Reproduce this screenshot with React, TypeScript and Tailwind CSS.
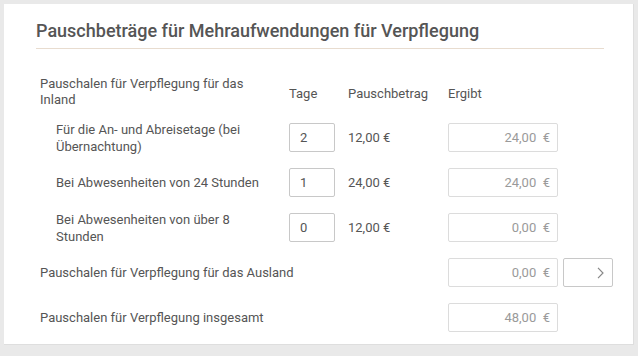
const font = { fontFamily: 'Roboto, "Noto Sans", sans-serif' }

function ResultBox({ value }: { value: string }) {
  return (
    <div className="flex h-[29px] w-[110px] shrink-0 items-center justify-end rounded-[2px] border border-[#dcdcdc] bg-white pr-[7px] text-[13px] text-[#9a9a9a]">
      {value}&nbsp;&nbsp;€
    </div>
  )
}

function DaysInput({ value }: { value: string }) {
  return (
    <div className="flex h-[29px] w-[46px] items-center rounded-[2px] border border-[#c8c8c8] bg-white pl-[10px] text-[13px] text-[#555]">
      {value}
    </div>
  )
}

const rows = [
  { label: 'Für die An- und Abreisetage (bei Übernachtung)', days: '2', rate: '12,00 €', total: '24,00' },
  { label: 'Bei Abwesenheiten von 24 Stunden', days: '1', rate: '24,00 €', total: '24,00' },
  { label: 'Bei Abwesenheiten von über 8 Stunden', days: '0', rate: '12,00 €', total: '0,00' },
]

export default function App() {
  return (
    <div className="h-[356px] w-[638px] bg-[#e9e9e9] pl-[4px] pt-[4px]" style={font}>
      <div className="h-[341px] w-[630px] border-r border-b border-[#dedede] bg-white pl-[32px]">
        <h2 className="pt-[14px] text-[18px] leading-[26px] font-medium text-[#555]">
          Pauschbeträge für Mehraufwendungen für Verpflegung
        </h2>
        <div className="mt-[4px] h-px w-[568px] bg-[#e8dccf]" />

        <div className="pl-[4px] text-[13px] leading-[16px] text-[#555]">
          <div className="mt-[27px] flex items-center">
            <div className="w-[249px] shrink-0">
              <div className="w-[215px]">Pauschalen für Verpflegung für das Inland</div>
            </div>
            <div className="w-[59px] shrink-0 pt-[4px]">Tage</div>
            <div className="w-[100px] shrink-0 pt-[4px]">Pauschbetrag</div>
            <div className="w-[110px] shrink-0 pt-[4px]">Ergibt</div>
          </div>

          <div className="mt-[15px] flex flex-col gap-[16px]">
            {rows.map((r) => (
              <div key={r.label} className="flex h-[29px] items-center">
                <div className="w-[249px] shrink-0 pl-[16px]">
                  <div className="w-[212px] leading-[17px]">{r.label}</div>
                </div>
                <div className="w-[59px] shrink-0">
                  <DaysInput value={r.days} />
                </div>
                <div className="w-[100px] shrink-0">{r.rate}</div>
                <ResultBox value={r.total} />
              </div>
            ))}

            <div className="flex h-[29px] items-center">
              <div className="w-[408px] shrink-0">Pauschalen für Verpflegung für das Ausland</div>
              <ResultBox value="0,00" />
              <button className="ml-[5px] flex h-[29px] w-[50px] shrink-0 items-center justify-end rounded-[2px] border border-[#c8c8c8] bg-white pr-[8px]">
                <svg width="7" height="12" viewBox="0 0 7 12" fill="none">
                  <polyline points="1,0.8 6,6 1,11.2" stroke="#888" strokeWidth="1.2" />
                </svg>
              </button>
            </div>

            <div className="flex h-[29px] items-center">
              <div className="w-[408px] shrink-0">Pauschalen für Verpflegung insgesamt</div>
              <ResultBox value="48,00" />
            </div>
          </div>
        </div>
      </div>
    </div>
  )
}
